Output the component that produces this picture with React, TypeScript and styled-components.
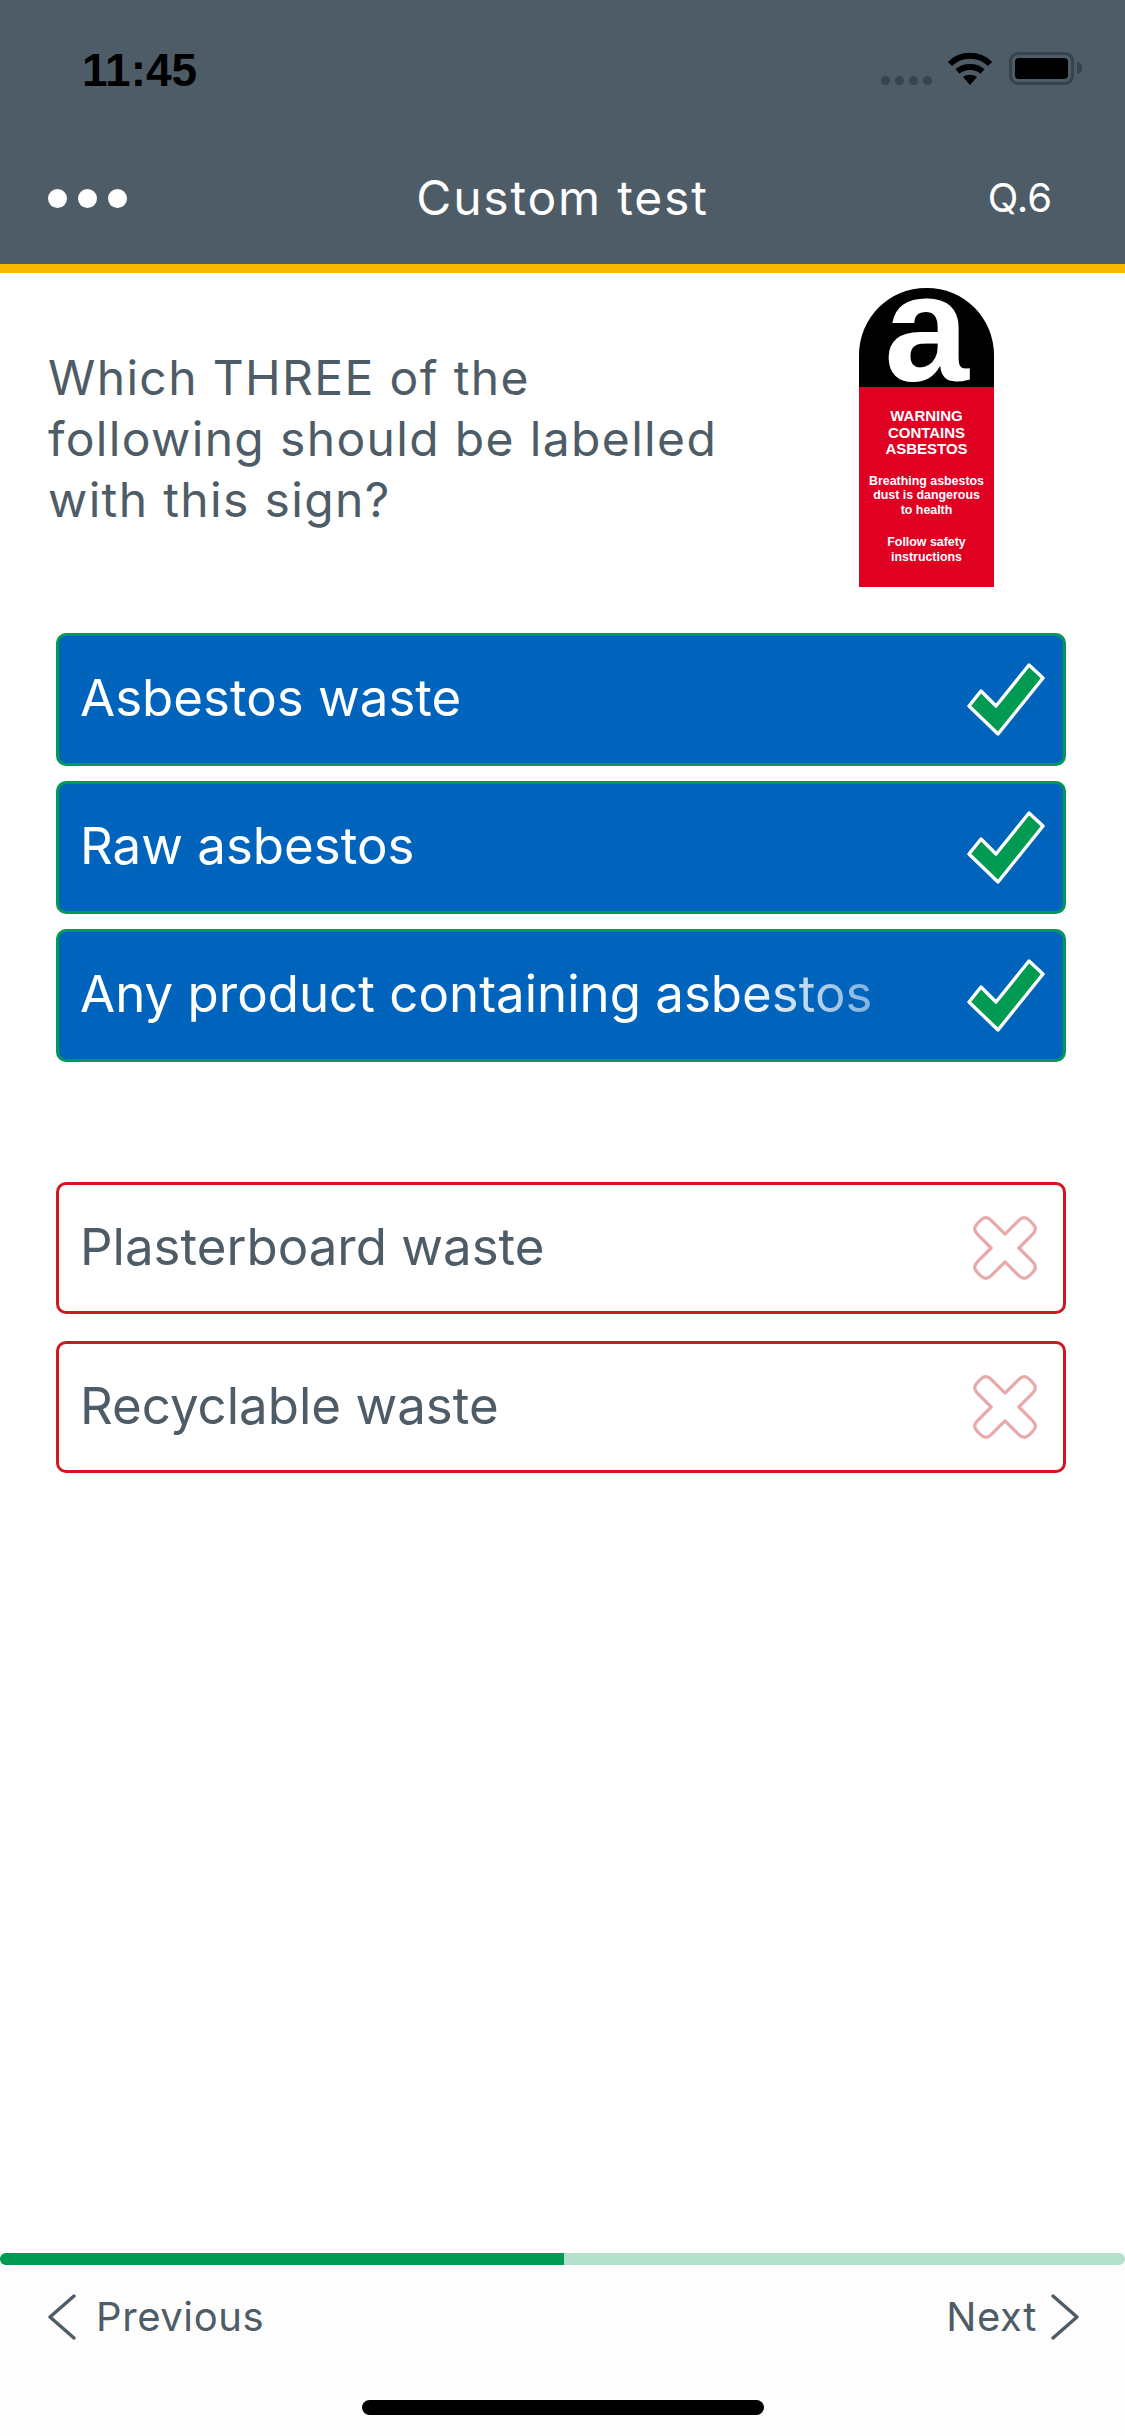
import React from "react";
import styled, { createGlobalStyle } from "styled-components";

const Global = createGlobalStyle`
  html, body { margin: 0; padding: 0; background: #fff; }
  * { box-sizing: border-box; }
`;

const Page = styled.div`
  width: 1125px;
  height: 2436px;
  display: flex;
  flex-direction: column;
  background: #fff;
  font-family: Inter, "Liberation Sans", sans-serif;
  overflow: hidden;
`;

const Header = styled.header`
  height: 273px;
  flex: none;
  background: #4d5c66;
  border-bottom: 9px solid #fab800;
  display: flex;
  flex-direction: column;
`;

const StatusBar = styled.div`
  height: 52px;
  margin-top: 48px;
  padding: 0 51px 0 82px;
  display: flex;
  justify-content: space-between;
  align-items: flex-start;
`;

const Clock = styled.span`
  font-family: "Liberation Sans", sans-serif;
  font-size: 46px;
  line-height: 44px;
  font-weight: 700;
  color: #000;
`;

const StatusIcons = styled.div`
  display: flex;
  align-items: flex-start;
  margin-top: 4px;
`;

const SignalDots = styled.div`
  display: flex;
  gap: 5px;
  margin: 24px 15px 0 0;
`;

const SignalDot = styled.i`
  display: block;
  width: 9px;
  height: 9px;
  border-radius: 50%;
  background: #37434d;
`;

const Battery = styled.div`
  position: relative;
  width: 65px;
  height: 33px;
  margin-left: 16px;
  padding: 3px;
  border: 3px solid #37434d;
  border-radius: 9px;
  &::after {
    content: "";
    position: absolute;
    right: -11px;
    top: 7px;
    width: 5px;
    height: 12px;
    background: #37434d;
    border-radius: 0 5px 5px 0;
  }
`;

const BatteryFill = styled.div`
  width: 100%;
  height: 100%;
  background: #000;
  border-radius: 4px;
`;

const NavBar = styled.nav`
  height: 60px;
  margin-top: 68px;
  padding: 0 48px;
  display: grid;
  grid-template-columns: 1fr auto 1fr;
  align-items: center;
  color: #fff;
`;

const Dots = styled.div`
  display: flex;
  gap: 11px;
`;

const Dot = styled.i`
  display: block;
  width: 19px;
  height: 19px;
  border-radius: 50%;
  background: #fff;
`;

const Title = styled.h1`
  margin: 0;
  font-size: 48px;
  line-height: 60px;
  font-weight: 400;
  letter-spacing: 1.8px;
`;

const QuestionNo = styled.span`
  justify-self: end;
  margin-right: 25px;
  font-size: 40px;
  line-height: 60px;
`;

const Main = styled.main`
  flex: 1;
  padding: 15px 59px 0 48px;
`;

const QuestionRow = styled.section`
  display: flex;
  justify-content: space-between;
  align-items: flex-start;
  padding-right: 72px;
`;

const QuestionText = styled.p`
  width: 700px;
  margin: 59px 0 0;
  font-size: 48px;
  line-height: 61px;
  letter-spacing: 1.35px;
  color: #4d5c66;
`;

const Sign = styled.figure`
  width: 135px;
  height: 299px;
  margin: 0;
  flex: none;
  display: flex;
  flex-direction: column;
  font-family: "Liberation Sans", sans-serif;
  font-weight: 700;
  color: #fff;
  text-align: center;
`;

const SignDome = styled.div`
  height: 99px;
  background: #000;
  border-radius: 67px 67px 0 0;
  font-size: 152px;
  line-height: 80px;
`;

const SignBody = styled.figcaption`
  flex: 1;
  background: #e00022;
  padding-top: 21px;
`;

const SignHeading = styled.div`
  font-size: 15px;
  line-height: 16.5px;
  margin-bottom: 16px;
`;

const SignNote = styled.div`
  font-size: 12.4px;
  line-height: 14.5px;
  margin-bottom: 18px;
`;

const AnswerGroup = styled.div<{ $gap: number; $top: number }>`
  display: flex;
  flex-direction: column;
  gap: ${(p) => p.$gap}px;
  margin: ${(p) => p.$top}px 0 0 8px;
`;

const Answer = styled.div<{ $correct?: boolean }>`
  height: ${(p) => (p.$correct ? 133 : 132)}px;
  padding: 0 ${(p) => (p.$correct ? 17 : 25)}px 0 21px;
  display: flex;
  align-items: center;
  justify-content: space-between;
  border-radius: 10px;
  border: 3px solid ${(p) => (p.$correct ? "#009a52" : "#d0181f")};
  background: ${(p) => (p.$correct ? "#0064bd" : "#fff")};
  color: ${(p) => (p.$correct ? "#fff" : "#4d5c66")};
  font-size: 51px;
  line-height: 60px;
`;

const AnswerLabel = styled.span`
  padding-bottom: 3px;
`;

const Fade = styled.span`
  background: linear-gradient(90deg, #fff 0%, rgba(255, 255, 255, 0.5) 100%);
  -webkit-background-clip: text;
  background-clip: text;
  color: transparent;
`;

const MarkIcon = styled.svg`
  flex: none;
  display: block;
`;

const Progress = styled.div`
  height: 12px;
  flex: none;
  background: #b4e1cb;
  border-radius: 6px;
  overflow: hidden;
`;

const ProgressFill = styled.div`
  height: 100%;
  background: #009a52;
`;

const Footer = styled.footer`
  height: 171px;
  flex: none;
  background: #fdfdfd;
  display: flex;
  flex-direction: column;
  align-items: center;
`;

const FooterNav = styled.div`
  width: 100%;
  padding: 27px 45px 0 47px;
  display: flex;
  justify-content: space-between;
  align-items: center;
  color: #4d5c66;
  font-size: 40px;
  letter-spacing: 0.6px;
`;

const NavLink = styled.div<{ $gap: number }>`
  display: flex;
  align-items: center;
  gap: ${(p) => p.$gap}px;
`;

const HomeBar = styled.div`
  width: 402px;
  height: 15px;
  margin-top: 59px;
  background: #000;
  border-radius: 8px;
`;

const Check = () => (
  <MarkIcon width="80" height="76" viewBox="0 0 80 76">
    <path
      d="M3 44 L15 29 L30 44 L63 3 L77 16 L32 72 Z"
      fill="#009a52"
      stroke="#fff"
      strokeWidth="3.4"
      strokeLinejoin="round"
    />
  </MarkIcon>
);

const Cross = () => (
  <MarkIcon width="66" height="66" viewBox="2 2 62 62">
    <path
      d="M33 20 L46 7 Q51 2 56 7 L59 10 Q64 15 59 20 L46 33 L59 46 Q64 51 59 56 L56 59 Q51 64 46 59 L33 46 L20 59 Q15 64 10 59 L7 56 Q2 51 7 46 L20 33 L7 20 Q2 15 7 10 L10 7 Q15 2 20 7 Z"
      fill="#fff"
      stroke="#e9a9aa"
      strokeWidth="3"
      strokeLinejoin="round"
    />
  </MarkIcon>
);

const Chevron = ({ right }: { right?: boolean }) => (
  <MarkIcon width="29" height="46" viewBox="0 0 29 46">
    <path
      d={right ? "M2 2 L26 23 L2 44" : "M27 2 L3 23 L27 44"}
      fill="none"
      stroke="#4d5c66"
      strokeWidth="3.4"
      strokeLinecap="round"
      strokeLinejoin="round"
    />
  </MarkIcon>
);

const Wifi = () => (
  <MarkIcon width="46" height="33" viewBox="0 0 46 33">
    <path d="M3 12 C14 1 32 1 43 12" fill="none" stroke="#000" strokeWidth="6" />
    <path d="M10.5 19.5 C17 13.5 29 13.5 35.5 19.5" fill="none" stroke="#000" strokeWidth="6" />
    <path d="M16 25 C20 22 26 22 30 25 L23 33 Z" fill="#000" />
  </MarkIcon>
);

const correct = ["Asbestos waste", "Raw asbestos"];
const wrong = ["Plasterboard waste", "Recyclable waste"];

export default function App() {
  return (
    <Page>
      <Global />
      <Header>
        <StatusBar>
          <Clock>11:45</Clock>
          <StatusIcons>
            <SignalDots>
              <SignalDot />
              <SignalDot />
              <SignalDot />
              <SignalDot />
            </SignalDots>
            <Wifi />
            <Battery>
              <BatteryFill />
            </Battery>
          </StatusIcons>
        </StatusBar>
        <NavBar>
          <Dots>
            <Dot />
            <Dot />
            <Dot />
          </Dots>
          <Title>Custom test</Title>
          <QuestionNo>Q.6</QuestionNo>
        </NavBar>
      </Header>
      <Main>
        <QuestionRow>
          <QuestionText>Which THREE of the following should be labelled with this sign?</QuestionText>
          <Sign>
            <SignDome>a</SignDome>
            <SignBody>
              <SignHeading>
                WARNING
                <br />
                CONTAINS
                <br />
                ASBESTOS
              </SignHeading>
              <SignNote>
                Breathing asbestos
                <br />
                dust is dangerous
                <br />
                to health
              </SignNote>
              <SignNote>
                Follow safety
                <br />
                instructions
              </SignNote>
            </SignBody>
          </Sign>
        </QuestionRow>
        <AnswerGroup $gap={15} $top={46}>
          {correct.map((t) => (
            <Answer $correct key={t}>
              <AnswerLabel>{t}</AnswerLabel>
              <Check />
            </Answer>
          ))}
          <Answer $correct>
            <AnswerLabel>
              Any product containing asb<Fade>estos</Fade>
            </AnswerLabel>
            <Check />
          </Answer>
        </AnswerGroup>
        <AnswerGroup $gap={27} $top={120}>
          {wrong.map((t) => (
            <Answer key={t}>
              <AnswerLabel>{t}</AnswerLabel>
              <Cross />
            </Answer>
          ))}
        </AnswerGroup>
      </Main>
      <Progress>
        <ProgressFill style={{ width: `${(564 / 1125) * 100}%` }} />
      </Progress>
      <Footer>
        <FooterNav>
          <NavLink $gap={20}>
            <Chevron />
            Previous
          </NavLink>
          <NavLink $gap={14}>
            Next
            <Chevron right />
          </NavLink>
        </FooterNav>
        <HomeBar />
      </Footer>
    </Page>
  );
}
